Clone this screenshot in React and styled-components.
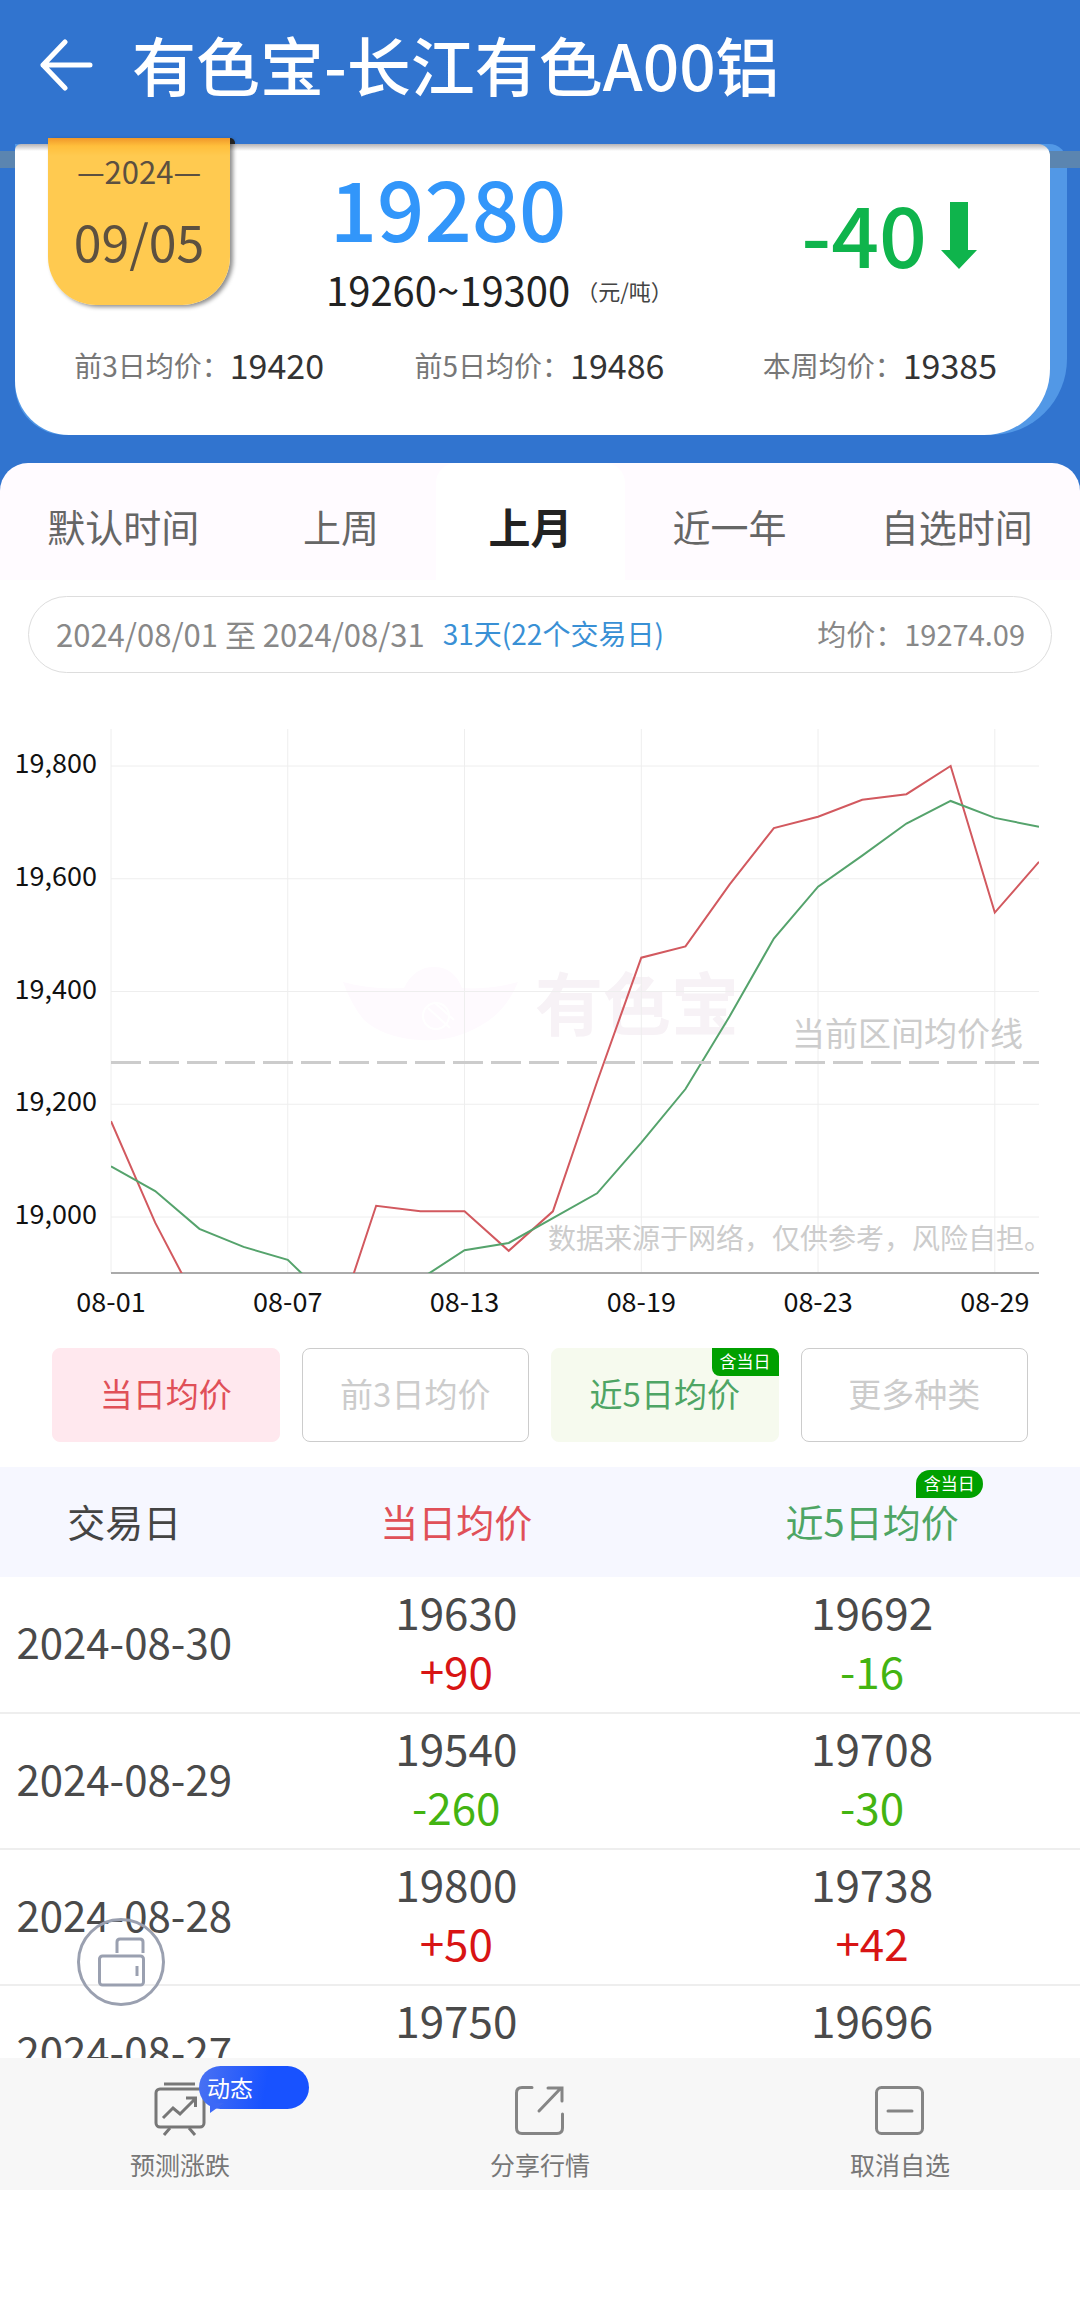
import React, { useState } from "react";
import styled, { createGlobalStyle } from "styled-components";

const GlobalStyle = createGlobalStyle`
  * {
    box-sizing: border-box;
  }
  body {
    margin: 0;
    background-color: #fff;
    font-family: "Noto Sans CJK SC", "Noto Sans", sans-serif;
  }
  button {
    padding: 0;
    border: none;
    background: none;
    font-family: inherit;
  }
`;

const StyPage = styled.div`
  display: flex;
  flex-direction: column;
  height: 100vh;
  overflow: hidden;
`;

/* header */
const StyHeader = styled.header`
  padding-bottom: 28px;
  background-color: #3174cf;
`;
const StyTitleBar = styled.div`
  display: flex;
  align-items: center;
  gap: 38px;
  height: 144px;
  padding: 0 40px 18px;
`;
const StyBackButton = styled.button`
  display: flex;
  padding-top: 4px;
  color: #fff;
`;
const StyTitle = styled.h1`
  margin: 0;
  font-size: 64px;
  font-weight: 500;
  line-height: 80px;
  color: #fff;
`;
const StyCardSheet = styled.div`
  position: relative;
  margin: 0 13px 0 15px;
  padding-right: 17px;
  border-radius: 0 18px 76px 50px;
  background-color: #5298e6;

  &::before {
    content: "";
    position: absolute;
    top: 7px;
    left: -15px;
    right: -13px;
    height: 17px;
    background-color: #5b85b0;
  }
`;
const StyCard = styled.section`
  position: relative;
  padding-bottom: 45px;
  border-radius: 6px 12px 66px 54px;
  background: linear-gradient(#b5b3b6, #fff 7px);
`;
const StyCardMain = styled.div`
  display: flex;
  align-items: flex-start;
  height: 176px;
  padding: 0 70px 0 33px;
`;
const StyDateTag = styled.div`
  position: relative;
  width: 182px;
  height: 167px;
  margin-top: -6px;
  padding-top: 18px;
  border-radius: 0 0 48px 48px;
  background: linear-gradient(#f0982a, #ffbf3c 8px, #ffca50 18px);
  box-shadow: 3px 2px 4px rgba(0, 0, 0, 0.45);
  text-align: center;
  color: #5c5040;

  &::after {
    content: "";
    position: absolute;
    top: 0;
    left: 100%;
    width: 5px;
    height: 6px;
    border-top-right-radius: 5px;
    background-color: #222;
  }
`;
const StyYear = styled.div`
  font-size: 31px;
  line-height: 30px;
`;
const StyDay = styled.div`
  margin-top: 24px;
  font-size: 50px;
  line-height: 60px;
`;
const StyPriceBlock = styled.div`
  display: grid;
  grid-template-columns: auto auto;
  align-items: center;
  margin-left: 96px;
  padding-top: 20px;
`;
const StyPrice = styled.strong`
  grid-column: 1;
  justify-self: center;
  font-size: 83px;
  font-weight: 500;
  line-height: 84px;
  color: #3296fa;
`;
const StyRange = styled.span`
  grid-column: 1;
  margin-top: 15px;
  font-size: 40px;
  line-height: 50px;
  color: #222;
`;
const StyUnit = styled.span`
  margin-top: 17px;
  margin-left: 6px;
  font-size: 22px;
  line-height: 50px;
  color: #444;
`;
const StyChange = styled.div`
  display: flex;
  align-items: flex-start;
  gap: 11px;
  margin-left: auto;
  padding-top: 46px;
  font-size: 84px;
  font-weight: 500;
  line-height: 84px;
  color: #0fb44c;

  svg {
    margin-top: 12px;
  }
`;
const StyStats = styled.dl`
  display: grid;
  grid-template-columns: repeat(3, 1fr);
  margin: 0;
  padding: 20px 0 0 14px;
`;
const StyStat = styled.div`
  display: flex;
  justify-content: center;
  align-items: center;
  line-height: 50px;
`;
const StyStatLabel = styled.dt`
  font-size: 28px;
  color: #777;
`;
const StyStatValue = styled.dd`
  margin: 0;
  font-size: 34px;
  color: #333;
`;

/* period tabs */
const StyTabsBack = styled.div`
  background-color: #3174cf;
`;
const StyTabs = styled.nav`
  display: grid;
  grid-template-columns: 13fr 10fr 10fr 11fr 13fr;
  height: 117px;
  overflow: hidden;
  border-radius: 28px 28px 0 0;
  background-color: #fffbff;
`;
const StyTab = styled.button`
  padding-top: 8px;
  border-radius: 20px 20px 0 0;
  font-size: ${(props) => (props.$active ? 42 : 38)}px;
  font-weight: ${(props) => (props.$active ? 700 : 400)};
  color: ${(props) => (props.$active ? "#222" : "#666")};
  background-color: ${(props) => (props.$active ? "#fff" : "transparent")};
`;

const StyPeriod = styled.div`
  display: flex;
  align-items: center;
  height: 77px;
  margin: 16px 28px 0;
  padding: 0 26px 3px 27px;
  border: 1px solid #ddd;
  border-radius: 39px;
  color: #888;
`;
const StyPeriodDates = styled.span`
  font-size: 31px;
`;
const StyPeriodDays = styled.span`
  margin-left: 18px;
  font-size: 28px;
  color: #3990d5;
`;
const StyPeriodAvg = styled.span`
  margin-left: auto;
  font-size: 29px;
`;

/* chart */
const StyChart = styled.svg`
  display: block;
  flex-shrink: 0;
  width: 100%;
  margin: 27px 0 26px;
`;
const StyAxisText = styled.text`
  font-size: 27px;
  fill: #111;
`;

const StySeriesRow = styled.div`
  display: grid;
  grid-template-columns: repeat(4, 1fr);
  gap: 22px;
  padding: 0 52px 25px;
`;
const StySeriesButton = styled.button`
  position: relative;
  height: 94px;
  padding-bottom: 4px;
  border: 1px solid ${(props) => props.$border};
  border-radius: 8px;
  background-color: ${(props) => props.$bg};
  font-size: 33px;
  color: ${(props) => props.$color};
`;
const StyBadge = styled.span`
  position: absolute;
  top: ${(props) => (props.$round ? "3px" : "-1px")};
  right: ${(props) => (props.$round ? "-24px" : "-1px")};
  width: 67px;
  height: 28px;
  border-radius: ${(props) => (props.$round ? "14px 14px 14px 0" : "0 8px 0 8px")};
  background-color: #00a000;
  text-align: center;
  font-size: 17px;
  font-weight: 400;
  line-height: 26px;
  color: #fff;
`;

/* price table */
const StyTableArea = styled.main`
  position: relative;
  flex: 1;
  min-height: 0;
  overflow: hidden;
`;
const StyTable = styled.table`
  width: 100%;
  table-layout: fixed;
  border-collapse: collapse;
`;
const StyTh = styled.th`
  width: ${(props) => props.$width};
  height: 110px;
  padding: 0 0 4px;
  background-color: #f6f7ff;
  font-size: 38px;
  font-weight: 400;
  color: ${(props) => props.$color};
`;
const StyThLabel = styled.span`
  position: relative;
  display: block;
  width: max-content;
  height: 106px;
  margin: 0 auto;
  line-height: 108px;
`;
const StyTd = styled.td`
  height: 136px;
  padding: 3px 0 11px;
  border-bottom: 2px solid #eee;
  text-align: center;
  font-size: ${(props) => (props.$date ? 42 : 44)}px;
  line-height: 59px;
  color: #4a4a4a;
`;
const StyDiff = styled.div`
  color: ${(props) => (props.$up ? "#d81414" : "#43b412")};
`;
const StyFloatButton = styled.button`
  position: absolute;
  left: 77px;
  bottom: 52px;
  width: 88px;
  height: 88px;
  border-radius: 50%;
`;

/* bottom bar */
const StyBottomBar = styled.nav`
  display: grid;
  grid-template-columns: repeat(3, 1fr);
  flex-shrink: 0;
  height: 132px;
  margin-bottom: 130px;
  background-color: #f7f7f7;
`;
const StyBottomButton = styled.button`
  display: flex;
  flex-direction: column;
  align-items: center;
  padding-top: 22px;
  font-size: 25px;
  line-height: 40px;
  color: #777;
`;
const StyIconBox = styled.span`
  position: relative;
  display: block;
  height: 64px;
`;
const StyBubble = styled.span`
  position: absolute;
  top: -14px;
  left: 49px;
  width: 110px;
  height: 43px;
  padding-left: 8px;
  border-radius: 22px;
  background: linear-gradient(100deg, #4a72f2, #1852ff 60%);
  text-align: left;
  font-size: 23px;
  line-height: 42px;
  color: #fff;

  &::after {
    content: "";
    position: absolute;
    left: 11px;
    bottom: -4px;
    border-top: 10px solid #3c68f6;
    border-right: 14px solid transparent;
  }
`;

const stats = [
  { label: "前3日均价：", value: 19420 },
  { label: "前5日均价：", value: 19486 },
  { label: "本周均价：", value: 19385 },
];

const tabs = ["默认时间", "上周", "上月", "近一年", "自选时间"];

const series = [
  { name: "当日均价", bg: "#ffe8ee", border: "#ffe8ee", color: "#e05058" },
  { name: "前3日均价", bg: "#fff", border: "#ccc", color: "#ccc" },
  { name: "近5日均价", bg: "#f6faee", border: "#f6faee", color: "#4ea564", badge: true },
  { name: "更多种类", bg: "#fff", border: "#ccc", color: "#ccc" },
];

const rows = [
  { date: "2024-08-30", day: 19630, dayDiff: "+90", avg: 19692, avgDiff: "-16" },
  { date: "2024-08-29", day: 19540, dayDiff: "-260", avg: 19708, avgDiff: "-30" },
  { date: "2024-08-28", day: 19800, dayDiff: "+50", avg: 19738, avgDiff: "+42" },
  { date: "2024-08-27", day: 19750, dayDiff: "+10", avg: 19696, avgDiff: "+55" },
];

const dayPrices = [
  19170, 18990, 18840, 18760, 18770, 18783, 19020, 19010, 19010, 18940, 19010,
  19240, 19460, 19480, 19590, 19690, 19710, 19740, 19750, 19800, 19540, 19630,
];
const avgPrices = [
  19090, 19046, 18979, 18947, 18924, 18848, 18850, 18890, 18941, 18954, 18998,
  19042, 19132, 19227, 19356, 19494, 19586, 19641, 19698, 19738, 19708, 19692,
];
const xLabels = ["08-01", "08-07", "08-13", "08-19", "08-23", "08-29"];
const yLabels = [19800, 19600, 19400, 19200, 19000];

// plot area inside the chart
const LEFT = 111;
const RIGHT = 1039;
const TOP = 29;
const BOTTOM = 573;

const toX = (index) => LEFT + (index * (RIGHT - LEFT)) / 21;
const toY = (price) => 66 + ((19800 - price) * 451) / 800;
const toPoints = (prices) =>
  prices.map((price, i) => `${toX(i)},${toY(price)}`).join(" ");

const PriceChart = () => (
  <StyChart viewBox="0 0 1080 622" role="img" aria-label="均价走势">
    <defs>
      <clipPath id="plot">
        <rect x={LEFT} y={TOP} width={RIGHT - LEFT} height={BOTTOM - TOP} />
      </clipPath>
    </defs>
    <g fill="#fefafe">
      <path d="M343 282 Q372 290 404 288 Q414 267 434 267 Q454 267 462 288 Q490 290 518 282 Q506 312 480 326 Q452 342 420 340 Q384 338 364 320 Q352 306 343 282 Z" />
      <circle cx="436" cy="316" r="13" fill="none" stroke="#fff" strokeWidth="2" />
      <path d="M428 308 L450 328 M434 302 L454 320" stroke="#fff" strokeWidth="2" />
    </g>
    <text x="535" y="330" fontSize="68" fontWeight="700" fill="#f7f2f6">
      有色宝
    </text>
    {yLabels.map((price) => (
      <g key={price}>
        <line x1={LEFT} x2={RIGHT} y1={toY(price)} y2={toY(price)} stroke="#eee" strokeWidth="1" />
        <StyAxisText x="97" y={toY(price) + 7} textAnchor="end">
          {price.toLocaleString("en-US")}
        </StyAxisText>
      </g>
    ))}
    {xLabels.map((label, i) => (
      <g key={label}>
        <line x1={toX(i * 4)} x2={toX(i * 4)} y1={TOP} y2={BOTTOM} stroke="#eee" strokeWidth="1" />
        <StyAxisText x={toX(i * 4)} y="612" textAnchor="middle">
          {label}
        </StyAxisText>
      </g>
    ))}
    <line x1={LEFT} x2={RIGHT} y1={BOTTOM} y2={BOTTOM} stroke="#aaa" strokeWidth="2" />
    <g clipPath="url(#plot)" fill="none" strokeWidth="2">
      <polyline points={toPoints(dayPrices)} stroke="#d2595f" />
      <polyline points={toPoints(avgPrices)} stroke="#55a36c" />
    </g>
    <line
      x1={LEFT}
      x2={RIGHT}
      y1={toY(19274)}
      y2={toY(19274)}
      stroke="#ccc"
      strokeWidth="3"
      strokeDasharray="30 8"
    />
    <text x="1023" y="346" textAnchor="end" fontSize="33" fill="#ccc">
      当前区间均价线
    </text>
    <text x="548" y="549" fontSize="28" fill="#ccc">
      数据来源于网络，仅供参考，风险自担。
    </text>
  </StyChart>
);

const BoardIcon = () => (
  <svg width="60" height="56" viewBox="0 0 60 56" fill="none" stroke="#777" strokeWidth="3">
    <path d="M14 4 H45" />
    <rect x="6" y="9" width="48" height="38" rx="4" />
    <path d="M13 38 L23 28 L30 34 L45 19 M36 18 H45.500 V27 M20 48 L14 55 M39 48 L45 55" />
  </svg>
);

const ShareIcon = () => (
  <svg width="60" height="56" viewBox="0 0 60 56" fill="none" stroke="#858585" strokeWidth="3" strokeLinecap="round">
    <path d="M22 7.500 H12 Q6.500 7.500 6.500 13 V48 Q6.500 53.500 12 53.500 H47 Q52.500 53.500 52.500 48 V34" />
    <path d="M29 31 L51 8 M38 8 H52 V21" />
  </svg>
);

const MinusIcon = () => (
  <svg width="60" height="56" viewBox="0 0 60 56" fill="none" stroke="#858585" strokeWidth="3" strokeLinecap="round">
    <rect x="6.500" y="7.500" width="46" height="46" rx="5" />
    <path d="M18 31 H42" />
  </svg>
);

const App = () => {
  const [activeTab, setActiveTab] = useState("上月");

  return (
    <StyPage>
      <GlobalStyle />
      <StyHeader>
        <StyTitleBar>
          <StyBackButton type="button" aria-label="返回">
            <svg width="54" height="52" viewBox="0 0 54 52" fill="none" stroke="currentColor" strokeWidth="5" strokeLinecap="round" strokeLinejoin="round">
              <path d="M25 3 L3 26 L25 49 M3 26 H50" />
            </svg>
          </StyBackButton>
          <StyTitle>有色宝-长江有色A00铝</StyTitle>
        </StyTitleBar>
        <StyCardSheet>
          <StyCard>
            <StyCardMain>
              <StyDateTag>
                <StyYear>—2024—</StyYear>
                <StyDay>09/05</StyDay>
              </StyDateTag>
              <StyPriceBlock>
                <StyPrice>19280</StyPrice>
                <StyRange>19260~19300</StyRange>
                <StyUnit>（元/吨）</StyUnit>
              </StyPriceBlock>
              <StyChange>
                -40
                <svg width="42" height="68" viewBox="0 0 42 68" fill="currentColor">
                  <path d="M12 0 H30 V48 H39 L21 67 L3 48 H12 Z" />
                </svg>
              </StyChange>
            </StyCardMain>
            <StyStats>
              {stats.map((item) => (
                <StyStat key={item.label}>
                  <StyStatLabel>{item.label}</StyStatLabel>
                  <StyStatValue>{item.value}</StyStatValue>
                </StyStat>
              ))}
            </StyStats>
          </StyCard>
        </StyCardSheet>
      </StyHeader>

      <StyTabsBack>
        <StyTabs>
          {tabs.map((tab) => (
            <StyTab key={tab} type="button" $active={tab === activeTab} onClick={() => setActiveTab(tab)}>
              {tab}
            </StyTab>
          ))}
        </StyTabs>
      </StyTabsBack>

      <StyPeriod>
        <StyPeriodDates>2024/08/01 至 2024/08/31</StyPeriodDates>
        <StyPeriodDays>31天(22个交易日)</StyPeriodDays>
        <StyPeriodAvg>均价：19274.09</StyPeriodAvg>
      </StyPeriod>

      <PriceChart />

      <StySeriesRow>
        {series.map((item) => (
          <StySeriesButton key={item.name} type="button" $bg={item.bg} $border={item.border} $color={item.color}>
            {item.name}
            {item.badge && <StyBadge>含当日</StyBadge>}
          </StySeriesButton>
        ))}
      </StySeriesRow>

      <StyTableArea>
        <StyTable>
          <thead>
            <tr>
              <StyTh $width="23%" $color="#444">
                交易日
              </StyTh>
              <StyTh $color="#e05058">当日均价</StyTh>
              <StyTh $color="#4ea564">
                <StyThLabel>
                  近5日均价
                  <StyBadge $round>含当日</StyBadge>
                </StyThLabel>
              </StyTh>
            </tr>
          </thead>
          <tbody>
            {rows.map((row) => (
              <tr key={row.date}>
                <StyTd $date>{row.date}</StyTd>
                <StyTd>
                  {row.day}
                  <StyDiff $up={row.dayDiff.startsWith("+")}>{row.dayDiff}</StyDiff>
                </StyTd>
                <StyTd>
                  {row.avg}
                  <StyDiff $up={row.avgDiff.startsWith("+")}>{row.avgDiff}</StyDiff>
                </StyTd>
              </tr>
            ))}
          </tbody>
        </StyTable>
        <StyFloatButton type="button" aria-label="切换横屏">
          <svg width="88" height="88" viewBox="0 0 88 88" fill="none" stroke="#9aa0b0" strokeWidth="3">
            <circle cx="44" cy="44" r="42.500" />
            <path d="M40 35 V24 Q40 21 43 21 H63 Q66 21 66 24 V35" />
            <rect x="22.500" y="38" width="44" height="29" rx="3" />
            <path d="M60 48 V58" />
          </svg>
        </StyFloatButton>
      </StyTableArea>

      <StyBottomBar>
        <StyBottomButton type="button">
          <StyIconBox>
            <BoardIcon />
            <StyBubble>动态</StyBubble>
          </StyIconBox>
          预测涨跌
        </StyBottomButton>
        <StyBottomButton type="button">
          <StyIconBox>
            <ShareIcon />
          </StyIconBox>
          分享行情
        </StyBottomButton>
        <StyBottomButton type="button">
          <StyIconBox>
            <MinusIcon />
          </StyIconBox>
          取消自选
        </StyBottomButton>
      </StyBottomBar>
    </StyPage>
  );
};

export default App;
